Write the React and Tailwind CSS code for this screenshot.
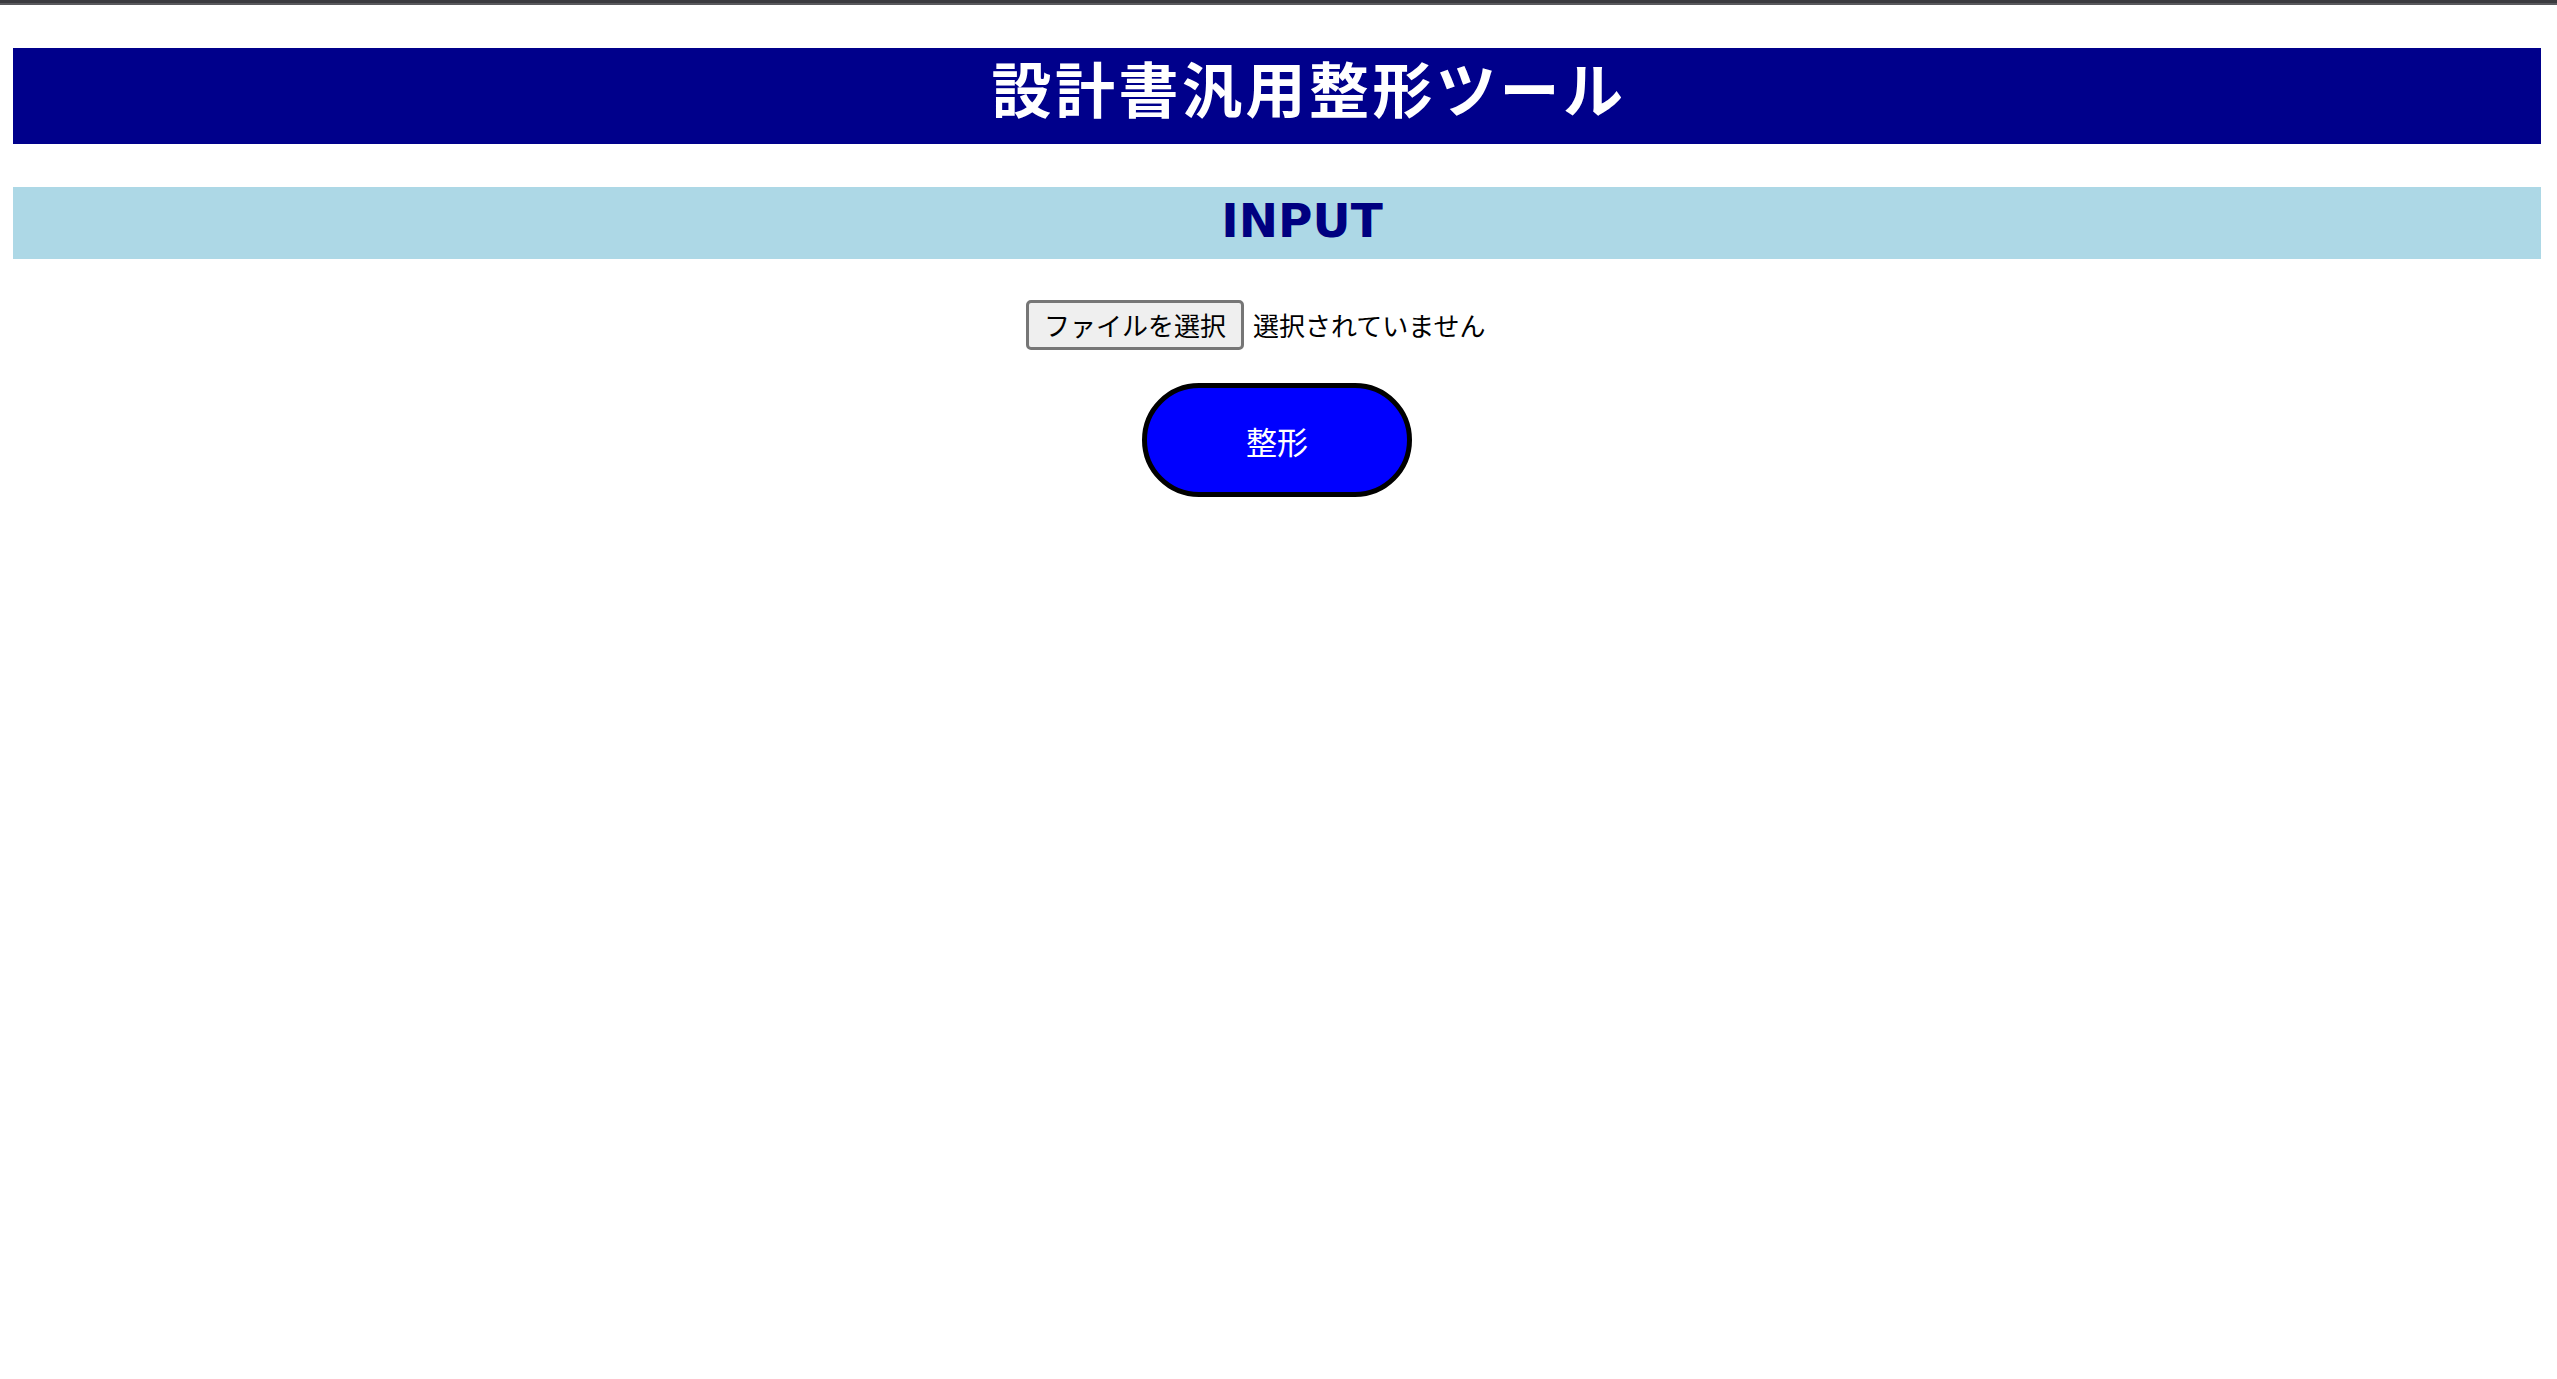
export default function App() {
  return (
    <div className="min-h-screen bg-white font-['Noto_Sans_CJK_JP','Noto_Sans',sans-serif]">
      <div className="h-[3px] bg-[#3b3b3f]" />
      <div className="h-[2px] bg-[#59595d]" />

      <div className="ml-[13px] mr-[16px] pt-[43px]">
        <h1 className="h-[96px] bg-[#00008b] flex items-center justify-center pl-[64px] pb-[18px] text-[60px] font-bold leading-none text-white tracking-[3.5px]">
          設計書汎用整形ツール
        </h1>

        <h2 className="mt-[43px] h-[72px] bg-[#add8e6] flex items-center justify-center pl-[50px] pb-[6px] text-[47px] font-bold leading-none text-[#000080] font-['DejaVu_Sans','Noto_Sans',sans-serif]">
          INPUT
        </h2>

        <div className="mt-[41px] flex justify-center">
          <div className="w-[502px] flex items-center">
            <button className="h-[50px] px-[15px] bg-[#efefef] border-[3px] border-[#767676] rounded-[5px] text-[26px] leading-none text-black">
              ファイルを選択
            </button>
            <span className="ml-[9px] text-[26px] leading-none text-black">選択されていません</span>
          </div>
        </div>

        <div className="mt-[33px] flex justify-center">
          <button className="w-[270px] h-[114px] rounded-full bg-[#0000ff] border-[5px] border-black text-white text-[31px] leading-none">
            整形
          </button>
        </div>
      </div>
    </div>
  );
}
